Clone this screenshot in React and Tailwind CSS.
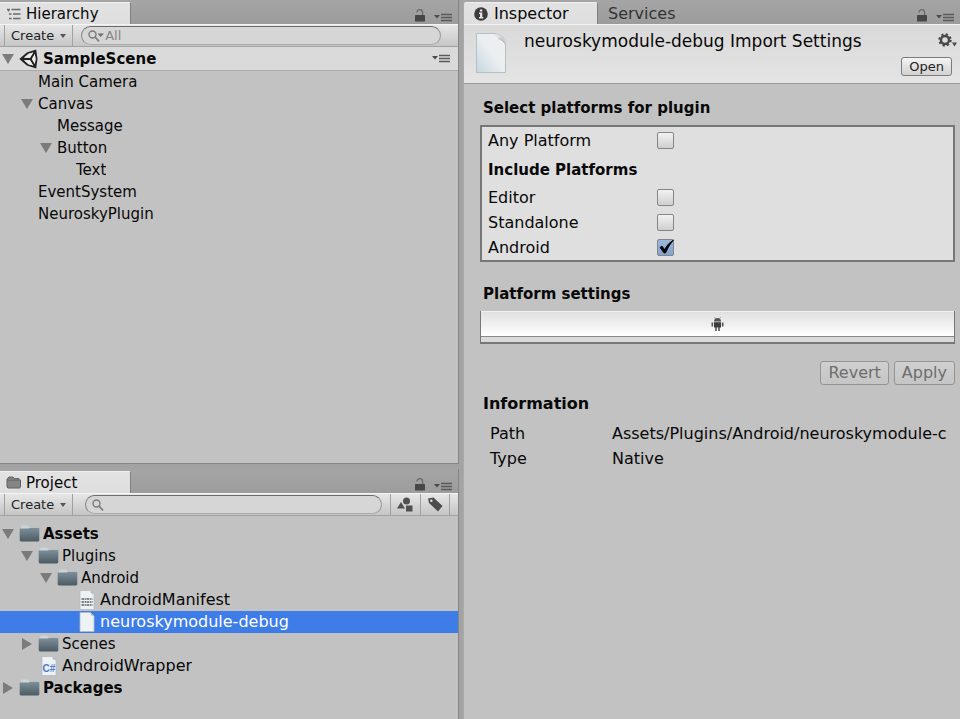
import React from "react";

const TOOLBAR =
  "flex h-[23px] shrink-0 items-stretch border-t border-b border-t-[#f4f4f4] border-b-[#a2a2a2] bg-linear-to-b from-[#e6e6e6] to-[#c6c6c6]";

function LockIcon() {
  return (
    <svg width="12" height="13" viewBox="0 0 12 13" aria-hidden="true">
      <path d="M3 3.500a2.800 2.800 0 0 1 5.600 0V6" fill="none" stroke="#6a6a6a" strokeWidth="1.3" />
      <rect x="1" y="6" width="10" height="6.5" rx="0.6" fill="#474747" />
    </svg>
  );
}

function MenuIcon() {
  return (
    <svg width="18" height="9" viewBox="0 0 18 9" aria-hidden="true">
      <path d="M0 2h6L3 5.5z" fill="#4c4c4c" />
      <path d="M7 1.5h11M7 4.5h11M7 7.5h11" stroke="#5a5a5a" strokeWidth="1.4" />
    </svg>
  );
}

function HierarchyIcon() {
  return (
    <svg width="16" height="12" viewBox="0 0 16 12" aria-hidden="true">
      <path d="M1 1.500h3M5.500 1.500h9M2.500 1.500v2M3 6h2.500M7 6h7.500M3 10.500h2.500M7 10.500h7.500" fill="none" stroke="#6a6a6a" strokeWidth="1.5" />
    </svg>
  );
}

function TabFolderIcon() {
  return (
    <svg width="16" height="13" viewBox="0 0 16 13" aria-hidden="true">
      <path d="M1 11V3.2L3 1h4l1.5 1.5H13V4h1.5v7.2l-1 .8H2z" fill="#858585" stroke="#606060" />
      <path d="M1.5 4.2H13" stroke="#666" />
    </svg>
  );
}

function InfoIcon() {
  return (
    <svg width="14" height="14" viewBox="0 0 14 14" aria-hidden="true">
      <circle cx="7" cy="7" r="6.8" fill="#3c3c3c" />
      <path d="M5.9 2.4h2.4v2H5.9zM5 5.6h3.3v4.5h1v1.3H5v-1.3h1V6.9H5z" fill="#e4e4e4" />
    </svg>
  );
}

function UnityIcon() {
  return (
    <svg width="20" height="20" viewBox="0 0 20 20" aria-hidden="true">
      <path d="M16 2.500L17.500 10 16 17.500 8 15.500 2 10 8 4.500z" fill="#ececec" />
      <path
        fillRule="evenodd"
        d="M17.2 .5 L7.8 3.4 .3 10 7.8 16.6 17.2 19.5 18.500 10Z M9.6 4.8 L14.2 3.6 11 8.7 5 8.7Z M5 11.300 L11 11.300 14.2 16.4 9.6 15.2Z M15.800 5 L16.600 10 15.800 15 12.900 10Z"
        fill="#232323"
      />
      <path d="M9.600 4.800L14.200 3.600 11 8.700 5 8.700zM5 11.300H11L14.200 16.400 9.600 15.200zM15.800 5L16.600 10 15.800 15 12.900 10z" fill="#ececec" />
    </svg>
  );
}

function FolderIcon() {
  return (
    <svg width="21" height="18" viewBox="0 0 21 18" aria-hidden="true">
      <defs>
        <linearGradient id="folder" x1="0" y1="0" x2="0" y2="1">
          <stop offset="0" stopColor="#80909a" />
          <stop offset="1" stopColor="#4b5b64" />
        </linearGradient>
      </defs>
      <path d="M2 4V1.500L3 .5h6l1 1.500h9.500V5H2z" fill="#cbd4d8" />
      <path d="M1 3.500h8.500L11 2.800h8.600l.7.7V15.500l-1 1H1.700l-1-1V4z" fill="url(#folder)" />
    </svg>
  );
}

function PageIcon({ kind }) {
  return (
    <span className="flex w-[21px] justify-center">
      <svg width="16" height="20" viewBox="0 0 16 20" aria-hidden="true">
        <path d="M1 .5h10.500L15 4v15.500H1z" fill="#eef2f5" stroke="#b4bcc2" strokeWidth="0.8" />
        <path d="M11.500.5L15 4l-3-.8z" fill="#a9b1b6" />
        {kind === "text" && (
          <path d="M2.500 9h11M2.500 12h11M2.500 15h11" stroke="#5d6367" strokeWidth="1.300" strokeDasharray="2.500 .6 1.500 .5" />
        )}
        {kind === "code" && (
          <text x="8" y="15.500" textAnchor="middle" fontSize="10" fontWeight="bold" fill="#4a7bd0" fontFamily="Liberation Sans, sans-serif">
            C#
          </text>
        )}
      </svg>
    </span>
  );
}

function LargePageIcon() {
  return (
    <svg width="30" height="40" viewBox="0 0 30 40" aria-hidden="true">
      <defs>
        <linearGradient id="page" x1="1" y1="0" x2="0" y2="1">
          <stop offset="0" stopColor="#f0f0f0" />
          <stop offset="0.5" stopColor="#e9eef0" />
          <stop offset="1" stopColor="#c5d7e0" />
        </linearGradient>
        <linearGradient id="fold" x1="0" y1="0" x2="1" y2="1">
          <stop offset="0.3" stopColor="#e3e3e3" />
          <stop offset="1" stopColor="#8e9294" />
        </linearGradient>
      </defs>
      <path d="M.5.5H19Q29 2 29.500 12v27.500H.5z" fill="url(#page)" stroke="#b5bfc4" />
      <path d="M17 1q10 0 12.500 12-1-5-7-6.500Q21 3 17 1z" fill="url(#fold)" />
    </svg>
  );
}

function SearchIcon({ menu }) {
  return (
    <svg width={menu ? 17 : 12} height="12" viewBox={menu ? "0 0 17 12" : "0 0 12 12"} className="shrink-0" aria-hidden="true">
      <circle cx="4.500" cy="4.500" r="3.500" fill="none" stroke="#7c7c7c" strokeWidth="1.400" />
      <path d="M7 7l4 4.300" stroke="#7c7c7c" strokeWidth="1.800" />
      {menu && <path d="M9.500 3.500h6.500L12.700 7z" fill="#6f6f6f" />}
    </svg>
  );
}

function ShapesIcon() {
  return (
    <svg width="16" height="15" viewBox="0 0 16 15" aria-hidden="true" fill="#505050">
      <circle cx="9.500" cy="4" r="3.500" />
      <path d="M0 11.500L4 5l4 6.500zM9 8.500h6.500V14.500H9z" />
    </svg>
  );
}

function TagIcon() {
  return (
    <svg width="16" height="15" viewBox="0 0 16 15" aria-hidden="true">
      <path fillRule="evenodd" d="M1 1.500L6.500.5l9 8.500-4.500 5.500-9-8.500zM4.300 2.500a1.300 1.300 0 1 0 0 2.600 1.300 1.300 0 0 0 0-2.600z" fill="#4c4c4c" />
    </svg>
  );
}

function GearIcon() {
  return (
    <svg width="19" height="15" viewBox="0 0 19 15" aria-hidden="true">
      <circle cx="7" cy="7" r="4" fill="none" stroke="#474747" strokeWidth="2.400" />
      <circle cx="7" cy="7" r="5.700" fill="none" stroke="#474747" strokeWidth="2" strokeDasharray="2.240 2.240" />
      <path d="M14 9.500h5l-2.500 4z" fill="#474747" />
    </svg>
  );
}

function AndroidIcon() {
  return (
    <svg width="13" height="15" viewBox="0 0 13 15" aria-hidden="true">
      <path d="M3 4.500Q3 1 6.500 1T10 4.500z" fill="#555" />
      <path d="M3.500.3l1 1.500M9.500.3l-1 1.500" stroke="#666" strokeWidth="0.7" />
      <path d="M3 5.200h7v5.300H3z" fill="#3c3c3c" />
      <path d="M1.300 5.500v4M11.700 5.500v4M5 10v4M8 10v4" stroke="#555" strokeWidth="1.600" />
    </svg>
  );
}

function Disclosure({ open, label }) {
  return (
    <button type="button" aria-label={label} aria-expanded={open} className="flex h-full w-4 shrink-0 items-center justify-center">
      <svg width="12" height="12" viewBox="0 0 12 12" aria-hidden="true">
        <path d={open ? "M0 1h12L6 11z" : "M1 0v12l10-6z"} fill="#7b7b7b" />
      </svg>
    </button>
  );
}

function Tab({ icon, children }) {
  return (
    <button
      type="button"
      className="flex h-full w-[131px] items-center gap-1 rounded-tr-xs border-t border-r border-t-[#f0f0f0] border-r-[#808080] bg-linear-to-b from-[#e2e2e2] to-[#dedede] pl-1.5"
    >
      {icon}
      {children}
    </button>
  );
}

function PanelHeader({ children }) {
  return (
    <header className="flex h-6 shrink-0 items-stretch bg-linear-to-b from-[#a5a5a5] to-[#9c9c9c] pt-0.5">
      {children}
      <div className="ml-auto flex items-end gap-2 pr-1.5 pb-0.5">
        <button type="button" aria-label="Lock">
          <LockIcon />
        </button>
        <button type="button" aria-label="Panel menu">
          <MenuIcon />
        </button>
      </div>
    </header>
  );
}

function CreateButton() {
  return (
    <button type="button" className="ml-1 flex items-center gap-1.5 border-x border-[#a0a0a0] px-1.5 text-[13px] text-[#222]">
      Create
      <svg width="6" height="4" viewBox="0 0 6 4" aria-hidden="true">
        <path d="M0 0h6L3 4z" fill="#555" />
      </svg>
    </button>
  );
}

function Search({ placeholder, label, menu }) {
  return (
    <label className="my-px flex min-w-0 flex-1 items-center rounded-full border border-t-[#6c6c6c] border-r-[#999] border-b-[#aaa] border-l-[#888] bg-[#d6d6d6] pl-1.5">
      <SearchIcon menu={menu} />
      <input type="text" aria-label={label} placeholder={placeholder} className="h-4 w-full min-w-0 bg-transparent text-[13px] outline-none placeholder:text-[#858585]" />
    </label>
  );
}

const INDENT = ["pl-0", "pl-[19px]", "pl-[38px]", "pl-[57px]"];

function TreeRow({ depth, open, icon, bold, large, selected, children }) {
  return (
    <li className={`flex h-[22px] items-center ${INDENT[depth]} ${bold ? "font-bold" : ""} ${large ? "text-base" : ""} ${selected ? "bg-[#3e7de7] text-white" : ""}`}>
      {open === undefined ? <span className="w-4 shrink-0" /> : <Disclosure open={open} label={`Toggle ${children}`} />}
      <span className="flex min-w-0 items-center gap-[3px] pl-[3px]">
        {icon}
        <span className="truncate">{children}</span>
      </span>
    </li>
  );
}

function HierarchyPanel() {
  return (
    <section className="flex min-h-0 flex-col border-r border-b border-[#858585]">
      <PanelHeader>
        <Tab icon={<HierarchyIcon />}>Hierarchy</Tab>
      </PanelHeader>
      <div className={TOOLBAR}>
        <CreateButton />
        <div className="flex flex-1 pr-[17px] pl-2">
          <Search label="Search hierarchy" placeholder="All" menu />
        </div>
      </div>
      <div className="flex h-6 shrink-0 items-center border-b border-[#aaa] bg-[#dadada] pr-2 font-bold">
        <Disclosure open label="Toggle SampleScene" />
        <span className="flex items-center gap-1 pl-[3px]">
          <UnityIcon />
          SampleScene
        </span>
        <button type="button" aria-label="Scene menu" className="ml-auto">
          <MenuIcon />
        </button>
      </div>
      <ul>
        <TreeRow depth={1}>Main Camera</TreeRow>
        <TreeRow depth={1} open>Canvas</TreeRow>
        <TreeRow depth={2}>Message</TreeRow>
        <TreeRow depth={2} open>Button</TreeRow>
        <TreeRow depth={3}>Text</TreeRow>
        <TreeRow depth={1}>EventSystem</TreeRow>
        <TreeRow depth={1}>NeuroskyPlugin</TreeRow>
      </ul>
    </section>
  );
}

function ProjectPanel() {
  return (
    <section className="flex min-h-0 flex-col border-r border-[#858585]">
      <PanelHeader>
        <Tab icon={<TabFolderIcon />}>Project</Tab>
      </PanelHeader>
      <div className={TOOLBAR}>
        <CreateButton />
        <div className="flex flex-1 px-2 pl-3">
          <Search label="Search project" />
        </div>
        <button type="button" aria-label="Search by type" className="w-[30px] border-l border-[#a0a0a0] pl-1.5">
          <ShapesIcon />
        </button>
        <button type="button" aria-label="Search by label" className="mr-2 w-[30px] border-x border-[#a0a0a0] pl-1.5">
          <TagIcon />
        </button>
      </div>
      <ul className="pt-[7px]">
        <TreeRow depth={0} open bold icon={<FolderIcon />}>Assets</TreeRow>
        <TreeRow depth={1} open icon={<FolderIcon />}>Plugins</TreeRow>
        <TreeRow depth={2} open icon={<FolderIcon />}>Android</TreeRow>
        <TreeRow depth={3} large icon={<PageIcon kind="text" />}>AndroidManifest</TreeRow>
        <TreeRow depth={3} large selected icon={<PageIcon />}>neuroskymodule-debug</TreeRow>
        <TreeRow depth={1} open={false} icon={<FolderIcon />}>Scenes</TreeRow>
        <TreeRow depth={1} large icon={<PageIcon kind="code" />}>AndroidWrapper</TreeRow>
        <TreeRow depth={0} open={false} bold icon={<FolderIcon />}>Packages</TreeRow>
      </ul>
    </section>
  );
}

function Platform({ checked, children }) {
  return (
    <label className="flex h-[25px] items-center text-base">
      <span className="w-[169px]">{children}</span>
      <span className="relative flex">
        <input
          type="checkbox"
          defaultChecked={checked}
          className="peer size-[17px] appearance-none rounded-xs border border-[#858585] bg-linear-to-b from-[#f2f2f2] to-[#cfcfcf] checked:from-[#9db7dc] checked:to-[#82a3d2]"
        />
        <svg width="18" height="18" viewBox="0 0 18 18" className="pointer-events-none absolute inset-0 hidden peer-checked:block" aria-hidden="true">
          <path d="M3 8.500l2-1.500 2.500 3.500Q11 4 16.500 1 12 6 8.500 14H7z" fill="#050505" stroke="#050505" strokeWidth="0.800" />
        </svg>
      </span>
    </label>
  );
}

function ActionButton({ children }) {
  return (
    <button type="button" disabled className="h-6 rounded-[3px] border border-[#949494] bg-linear-to-b from-[#d0d0d0] to-[#c5c5c5] px-[7px] text-base leading-5 text-[#6d6d6d]">
      {children}
    </button>
  );
}

function InspectorPanel() {
  return (
    <section className="flex min-w-0 flex-col border-l border-[#aaa]">
      <PanelHeader>
        <button
          type="button"
          className="flex w-[134px] items-center gap-1.5 rounded-t-xs border-t border-r border-t-[#f0f0f0] border-r-[#808080] bg-linear-to-b from-[#e2e2e2] to-[#dedede] pl-2.5 text-base"
        >
          <InfoIcon />
          Inspector
        </button>
        <button type="button" className="px-2.5 text-base text-[#333]">
          Services
        </button>
      </PanelHeader>
      <div className="flex h-[60px] shrink-0 border-t border-b border-t-[#f4f4f4] border-b-[#9c9c9c] bg-linear-to-b from-[#d9d9d9] to-[#e4e4e4] pt-2 pr-[3px] pl-3">
        <LargePageIcon />
        <h1 className="flex-1 pl-[18px] text-[17px] leading-4 whitespace-nowrap">neuroskymodule-debug Import Settings</h1>
        <div className="flex flex-col items-end gap-[9px]">
          <button type="button" aria-label="Settings">
            <GearIcon />
          </button>
          <button type="button" className="mr-[5px] h-[19px] rounded-[3px] border border-[#7c7c7c] bg-linear-to-b from-[#f4f4f4] to-[#d2d2d2] px-[7px] text-[13px] leading-4 text-[#222]">
            Open
          </button>
        </div>
      </div>
      <div className="pt-3.5 pr-[5px] pl-4">
        <h2 className="pl-[3px] font-bold">Select platforms for plugin</h2>
        <div className="mt-[7px] border-2 border-[#777] bg-[#dfdfdf] pt-px pl-1.5">
          <Platform>Any Platform</Platform>
          <h3 className="pt-[7px] pb-[5px] font-bold">Include Platforms</h3>
          <Platform>Editor</Platform>
          <Platform>Standalone</Platform>
          <Platform checked>Android</Platform>
        </div>
        <h2 className="mt-[22px] pl-[3px] font-bold">Platform settings</h2>
        <div className="mt-[7px] border-x border-b-2 border-[#777] bg-[#dadada] pb-[5px]">
          <button type="button" aria-label="Android settings" className="flex h-[26px] w-full items-center justify-center border-t border-b border-t-[#f0f0f0] border-b-[#888] bg-linear-to-b from-[#e0e0e0] to-white">
            <AndroidIcon />
          </button>
        </div>
        <div className="mt-[17px] flex justify-end gap-[5px]">
          <ActionButton>Revert</ActionButton>
          <ActionButton>Apply</ActionButton>
        </div>
        <h2 className="mt-[9px] pl-[3px] text-base leading-5 font-bold">Information</h2>
        <dl className="mt-[7px] grid grid-cols-[122px_1fr] pr-2 pl-2.5 text-base leading-[25px]">
          <dt>Path</dt>
          <dd className="overflow-hidden whitespace-nowrap">Assets/Plugins/Android/neuroskymodule-c</dd>
          <dt>Type</dt>
          <dd>Native</dd>
        </dl>
      </div>
    </section>
  );
}

export default function App() {
  return (
    <main className="grid h-screen grid-cols-[459fr_497fr] gap-1 overflow-hidden bg-[#a3a3a3] font-['DejaVu_Sans',sans-serif] text-[15px] leading-5 text-[#080808]">
      <div className="grid min-w-0 grid-rows-[464fr_250fr] gap-[5px] *:bg-[#c2c2c2]">
        <HierarchyPanel />
        <ProjectPanel />
      </div>
      <div className="grid min-w-0 *:bg-[#c2c2c2]">
        <InspectorPanel />
      </div>
    </main>
  );
}
